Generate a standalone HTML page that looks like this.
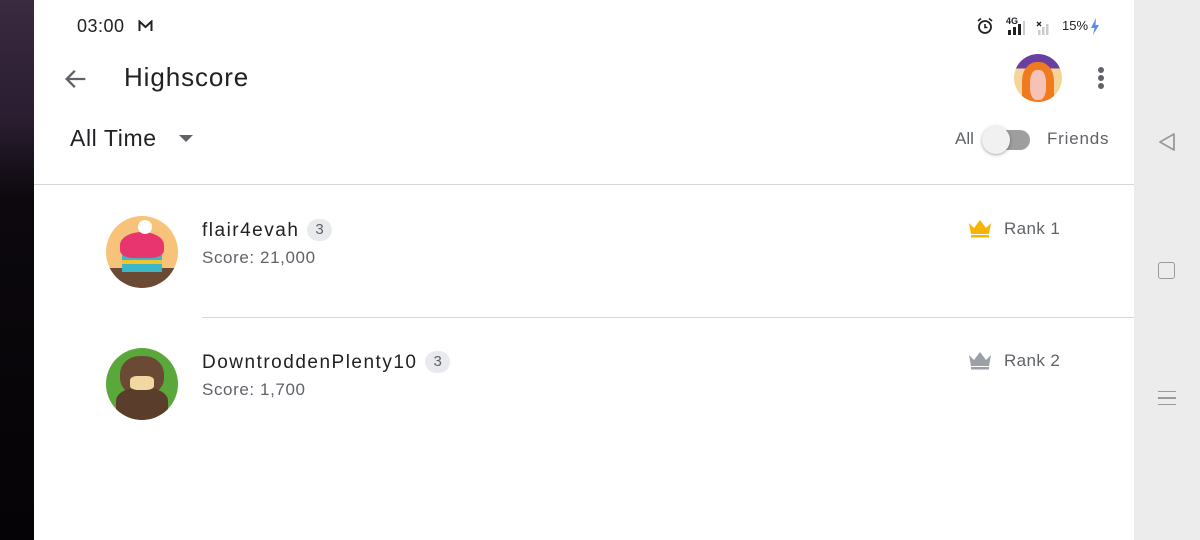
<!DOCTYPE html>
<html><head><meta charset="utf-8"><style>
*{margin:0;padding:0;box-sizing:border-box}
body{width:1200px;height:540px;overflow:hidden;position:relative;background:#fff;font-family:"Liberation Sans",Roboto,sans-serif;color:#202124}
#bg{position:absolute;left:0;top:0;width:34px;height:540px;background:linear-gradient(#3a2a40 0,#2a1d30 120px,#0c080e 200px,#050305 540px)}
#nav{position:absolute;left:1134px;top:0;width:66px;height:540px;background:#ececec}
.t{position:absolute;white-space:nowrap}
.hr{position:absolute;height:1px;background:#d6d6d6}
.badge{display:inline-block;background:#e8eaed;border-radius:11px;padding:0 8px;font-size:15px;color:#5f6368;height:22px;line-height:22px;vertical-align:2px;margin-left:8px;letter-spacing:0}
.av{position:absolute;width:72px;height:72px;border-radius:50%;overflow:hidden}
</style></head><body>
<div id="bg"></div>
<div id="nav">
<svg style="position:absolute;left:22px;top:130px" width="24" height="24" viewBox="0 0 24 24"><path d="M18 4 L4 12 L18 20 Z" fill="none" stroke="#9a9a9a" stroke-width="1.8" stroke-linejoin="round"/></svg>
<div style="position:absolute;left:24px;top:262px;width:17px;height:17px;border:1.8px solid #9a9a9a;border-radius:3px"></div>
<div style="position:absolute;left:24px;top:391px;width:18px;height:14px;border-top:1.5px solid #9a9a9a;border-bottom:1.5px solid #9a9a9a"></div>
<div style="position:absolute;left:24px;top:397px;width:18px;height:1.5px;background:#9a9a9a"></div>
</div>
<div class="t" style="left:77px;top:16px;font-size:18px;letter-spacing:0.5px">03:00</div>
<svg style="position:absolute;left:138px;top:20px" width="15" height="12" viewBox="0 0 15 12"><path d="M1.5 11V1.5L7.5 7 13.5 1.5V11" fill="none" stroke="#202124" stroke-width="2"/></svg>
<svg style="position:absolute;left:976px;top:17px" width="18" height="18" viewBox="0 0 18 18"><circle cx="9" cy="10" r="6" fill="none" stroke="#202124" stroke-width="1.8"/><path d="M9 7v3.5h2.5M2 4l3-2.5M16 4l-3-2.5" fill="none" stroke="#202124" stroke-width="1.6"/></svg>
<div class="t" style="left:1006px;top:16px;font-size:9px;font-weight:bold">4G</div>
<svg style="position:absolute;left:1006px;top:20px" width="60" height="16" viewBox="0 0 60 16"><rect x="2" y="10" width="3" height="5" fill="#202124"/><rect x="7" y="7" width="3" height="8" fill="#202124"/><rect x="12" y="4" width="3" height="11" fill="#202124"/><rect x="17" y="1" width="2" height="14" fill="#ccc"/><rect x="32" y="10" width="2.5" height="5" fill="#ccc"/><rect x="36" y="7" width="2.5" height="8" fill="#ccc"/><rect x="40" y="4" width="2.5" height="11" fill="#ccc"/><path d="M31 2l4 4M35 2l-4 4" stroke="#202124" stroke-width="1.3"/></svg>
<div class="t" style="left:1062px;top:18px;font-size:13px">15%</div>
<svg style="position:absolute;left:1090px;top:18px" width="10" height="17" viewBox="0 0 10 17"><path d="M6 0L1 10h3.5L3 17l6-10H5.5z" fill="#5b8cf5"/></svg>
<svg style="position:absolute;left:62px;top:65px" width="28" height="28" viewBox="0 0 24 24"><path d="M20 12H5M11 5l-7 7 7 7" fill="none" stroke="#5f6368" stroke-width="2"/></svg>
<div class="t" style="left:124px;top:62px;font-size:26px;letter-spacing:0.9px">Highscore</div>
<div class="av" style="left:1014px;top:54px;width:48px;height:48px;background:linear-gradient(#6a3fa0 0,#6a3fa0 30%,#f5d49a 30%)"><div style="position:absolute;left:8px;top:8px;width:32px;height:42px;background:#f07a20;border-radius:45% 45% 20% 20%"></div><div style="position:absolute;left:16px;top:16px;width:16px;height:30px;background:#f5c2b5;border-radius:40%"></div></div>
<div style="position:absolute;left:1098px;top:67px;width:6px;height:6px;border-radius:50%;background:#5f6368;box-shadow:0 8px 0 #5f6368,0 16px 0 #5f6368"></div>
<div class="t" style="left:70px;top:125px;font-size:23px;letter-spacing:0.6px">All Time</div>
<div style="position:absolute;left:179px;top:135px;border-left:7px solid transparent;border-right:7px solid transparent;border-top:7px solid #5f6368"></div>
<div class="t" style="left:955px;top:129px;font-size:17px;color:#5f6368">All</div>
<div style="position:absolute;left:988px;top:130px;width:42px;height:20px;border-radius:10px;background:#9e9e9e"></div>
<div style="position:absolute;left:982px;top:126px;width:28px;height:28px;border-radius:50%;background:#f1f1f1;box-shadow:0 1px 3px rgba(0,0,0,.35)"></div>
<div class="t" style="left:1047px;top:129px;font-size:17px;color:#5f6368;letter-spacing:0.8px">Friends</div>
<div class="hr" style="left:34px;top:184px;width:1100px"></div>
<div class="av" style="left:106px;top:216px;background:#f7c27a"><div style="position:absolute;left:0;top:52px;width:72px;height:20px;background:#6b4a35"></div><div style="position:absolute;left:16px;top:36px;width:40px;height:20px;background:#3bb8c8"></div><div style="position:absolute;left:16px;top:44px;width:40px;height:4px;background:#f4c430"></div><div style="position:absolute;left:14px;top:16px;width:44px;height:26px;background:#e8356f;border-radius:50% 50% 30% 30%"></div><div style="position:absolute;left:32px;top:4px;width:14px;height:14px;background:#fff;border-radius:50%"></div></div>
<div class="t" style="left:202px;top:219px;font-size:19px;letter-spacing:1.5px">flair4evah<span class="badge">3</span></div>
<div class="t" style="left:202px;top:248px;font-size:17px;color:#5f6368;letter-spacing:0.6px">Score: 21,000</div>
<svg style="position:absolute;left:968px;top:219px" width="24" height="20" viewBox="0 0 24 20"><path d="M1 4l5 5 6-8 6 8 5-5-2 11H3z" fill="#f4b400"/><rect x="3" y="16" width="18" height="2.5" fill="#f4b400"/></svg>
<div class="t" style="left:1004px;top:219px;font-size:17px;color:#5f6368;letter-spacing:0.4px">Rank 1</div>
<div class="hr" style="left:202px;top:317px;width:932px"></div>
<div class="av" style="left:106px;top:348px;background:#5aa83a"><div style="position:absolute;left:14px;top:8px;width:44px;height:40px;background:#6b4a35;border-radius:45%"></div><div style="position:absolute;left:10px;top:40px;width:52px;height:32px;background:#5a3d2b;border-radius:40% 40% 0 0"></div><div style="position:absolute;left:24px;top:28px;width:24px;height:14px;background:#f0d8a0;border-radius:30%"></div></div>
<div class="t" style="left:202px;top:351px;font-size:19px;letter-spacing:1.5px">DowntroddenPlenty10<span class="badge">3</span></div>
<div class="t" style="left:202px;top:380px;font-size:17px;color:#5f6368;letter-spacing:0.6px">Score: 1,700</div>
<svg style="position:absolute;left:968px;top:351px" width="24" height="20" viewBox="0 0 24 20"><path d="M1 4l5 5 6-8 6 8 5-5-2 11H3z" fill="#9aa0a6"/><rect x="3" y="16" width="18" height="2.5" fill="#9aa0a6"/></svg>
<div class="t" style="left:1004px;top:351px;font-size:17px;color:#5f6368;letter-spacing:0.4px">Rank 2</div>
</body></html>
